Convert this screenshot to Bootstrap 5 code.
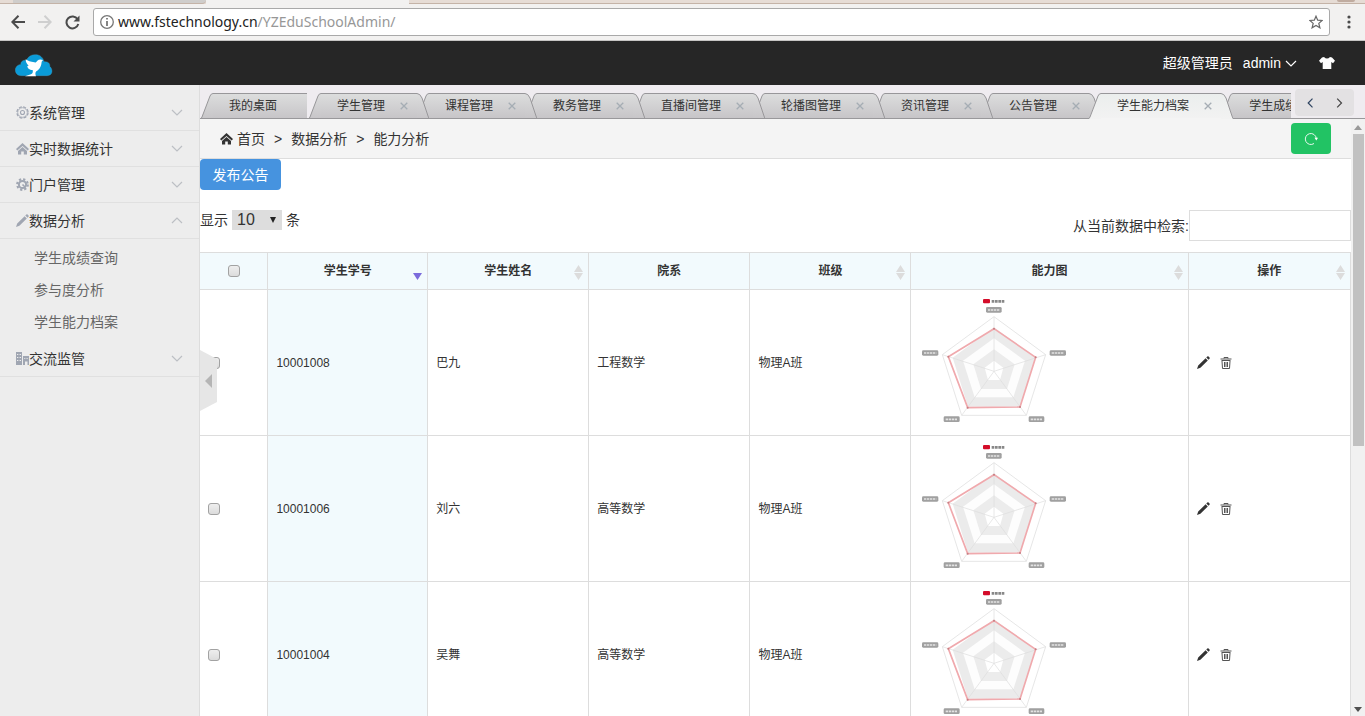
<!DOCTYPE html>
<html lang="zh-CN">
<head>
<meta charset="utf-8">
<meta name="viewport" content="width=device-width, initial-scale=1">
<title>能力分析</title>
<link href="https://cdn.jsdelivr.net/npm/bootstrap@5.3.0/dist/css/bootstrap.min.css" rel="stylesheet">
<style>
body{font-family:"Liberation Sans","Noto Sans CJK SC",sans-serif;font-size:14px;line-height:20px;color:#333;background:#fff}
svg{display:block;flex:none}
a{color:inherit;text-decoration:none}
button{color:inherit}
.plain-btn{border:0;background:none;padding:0}
.fit-h{min-height:0}
.fit-w{min-width:0}
/* browser chrome */
.chrome-strip{height:4px;background:#e6dcd5}
.chrome-strip span{border-bottom:1px solid #c4b3a7}
.strip-first{width:13px}
.strip-idle{width:193px;background:#cfcdcb;border-radius:0 0 4px 0}
.chrome-strip .strip-live{width:203px;background:#f2f1f0;border-color:#f2f1f0}
.strip-knob{width:18px;height:2px;margin-right:10px;background:#c0aca0;border-radius:0 0 3px 3px}
.toolbar{height:37px;gap:13px;background:#f2f1f0;border-bottom:1px solid #c6c5c4;padding:4px 12px 4px 11px}
.address{height:28px;border:1px solid #a9a9a9;border-radius:3px;background:#fff;margin-right:2px;padding:0 6px;font-family:"Noto Sans",sans-serif;color:#222}
.address .url-path{color:#979797}
/* application header */
.top-bar{height:44px;background:#262626;color:#fff;padding:0 30px 0 15px}
.user-btn{margin:0 22px 0 10px}
.side-menu{width:200px;background:#ededed;border-right:1px solid #ddd;padding-top:10px}
.menu-head{height:36px;width:100%;padding:0 16px;border-bottom:1px solid #e0e0e0}
.menu-head .ico{color:#a0a6b2}
.menu-head .chev{color:#bcbfc4}
.sub-menu{padding:3px 0 3px 34px;margin:0;list-style:none;line-height:32px;color:#666}
/* tabs: each one lies over the tab that follows it */
.tab-zone{height:34px;background:#efecf0;border-bottom:1px solid #99989b}
.tab-clip{overflow:hidden;height:34px;margin-bottom:-1px;padding:8px 0 0 1px}
.page-tab{height:26px;font-size:12px;margin-right:-12px;position:relative}
.page-tab:nth-child(2){z-index:9}.page-tab:nth-child(3){z-index:8}.page-tab:nth-child(4){z-index:7}
.page-tab:nth-child(5){z-index:6}.page-tab:nth-child(6){z-index:5}.page-tab:nth-child(7){z-index:4}
.page-tab:nth-child(8){z-index:3}.page-tab.current{z-index:10}
.page-tab .tab-mid{background:linear-gradient(#dcdddd,#c7c5c8);border-top:1px solid #98979a;border-bottom:1px solid #99989b;height:26px;padding:0 9px 0 16px;white-space:nowrap}
.page-tab.home{margin-right:2px;width:106px}
.page-tab .tab-x{color:#a5adb4;margin-left:15px}
.page-tab.current .tab-mid{background:linear-gradient(#ebeeed,#f2f2f2);border-bottom-color:#f4f4f4}
.tab-nav{height:27px;width:59px;margin:4px 11px 0 4px;background:#e3e1e3;border-radius:4px;padding:0 11px 0 12px}
/* content */
.crumbs{height:40px;background:#f4f4f4;border-bottom:1px solid #ddd;padding:0 20px}
.crumb-sep{margin:0 9px}
.refresh{width:40px;height:31px;background:#22c364;border-radius:4px}
.publish{width:81px;height:31px;border-radius:4px;background:#4693df;color:#fff}
.tools{margin:20px 0 11px}
.page-size{appearance:none;width:50px;height:20px;border:0;border-radius:0;margin:0 4px;padding:0 5px;line-height:20px;font-size:16px;color:#333;background:#ddd url("data:image/svg+xml,%3Csvg xmlns='http://www.w3.org/2000/svg' width='6' height='6'%3E%3Cpath d='M0 0h6L3 6z' fill='%23222'/%3E%3C/svg%3E") no-repeat right 6px center}
.search-box{width:162px;height:31px;border:1px solid #ddd}
.grid-table{table-layout:fixed;width:100%;font-size:12px;line-height:18px;border-collapse:collapse}
.grid-table th,.grid-table td{border:1px solid #ddd;border-left:0;padding:0 8px}
.grid-table th{height:37px;background:#f2fafd;text-align:center;position:relative}
.grid-table td{height:146px}
.grid-table td.sorted{background:#f2fafd}
.grid-table td.plot{padding:0}
.row-tools{gap:10px}
.sorter{position:absolute;right:5px;top:12px}
.c-check{width:5.9%}.c-id{width:13.9%}.c-std{width:14%}.c-plot{width:24.1%}
.tick{appearance:none;display:block;width:12px;height:12px;margin:0;border:1px solid #a2a2a2;border-radius:3px;background:linear-gradient(#eee,#dcdcdc)}
.grid-table th .tick{margin:0 auto}
.scroll-rail{width:14px;background:#f1f1f1}
.scroll-thumb{width:11px;height:53%;background:#c1c1c1}
.collapse-tab{position:absolute;left:200px;top:265px}
</style>
</head>
<body class="vh-100 overflow-hidden d-flex flex-column">
<svg width="0" height="0" class="position-absolute" aria-hidden="true">
  <defs>
    <linearGradient id="idle" x1="0" y1="0" x2="0" y2="1"><stop stop-color="#dcdddd"/><stop offset="1" stop-color="#c7c5c8"/></linearGradient>
    <linearGradient id="live" x1="0" y1="0" x2="0" y2="1"><stop stop-color="#ebeeed"/><stop offset="1" stop-color="#f2f2f2"/></linearGradient>
    <filter id="soft"><feGaussianBlur stdDeviation="1.6"/></filter>
  </defs>
  <symbol id="cap-l" viewBox="0 0 12 26"><path d="M0 26 9 3Q10 .5 12 .5V26z" fill="url(#idle)"/><path d="M0 25.500 1 24 9 3Q10 .5 12 .5M0 25.500H12" fill="none" stroke="#98979a"/></symbol>
  <symbol id="cap-r" viewBox="0 0 12 26"><path d="M12 26 5 5Q3 .5 0 .5V26z" fill="url(#idle)"/><path d="M12 25.500 11 23 5 5Q3 .5 0 .5M0 25.500H12" fill="none" stroke="#98979a"/></symbol>
  <symbol id="cap-l-on" viewBox="0 0 12 26"><path d="M0 26 9 3Q10 .5 12 .5V26z" fill="url(#live)"/><path d="M0 25.500 1 24 9 3Q10 .5 12 .5" fill="none" stroke="#98979a"/></symbol>
  <symbol id="cap-r-on" viewBox="0 0 12 26"><path d="M12 26 5 5Q3 .5 0 .5V26z" fill="url(#live)"/><path d="M12 25.500 11 23 5 5Q3 .5 0 .5" fill="none" stroke="#98979a"/></symbol>
  <symbol id="x" viewBox="0 0 8 8"><path d="M.7.700 7.300 7.300M7.300.7.700 7.300" stroke="currentColor" stroke-width="1.300"/></symbol>
  <symbol id="down" viewBox="0 0 12 7"><path d="M1 1l5 5 5-5" fill="none" stroke="currentColor" stroke-width="1.200"/></symbol>
  <symbol id="up" viewBox="0 0 12 7"><path d="M1 6l5-5 5 5" fill="none" stroke="currentColor" stroke-width="1.200"/></symbol>
  <symbol id="home" viewBox="0 0 13 12"><path d="M6.500 0 13 6 11.700 7.600 6.500 3 1.300 7.600 0 6z"/><path d="M6.500 3.900 11 7.900V11.500H7.800V8.500H5.200V11.500H2V7.900z"/></symbol>
  <symbol id="pencil" viewBox="0 0 13 13"><path d="M0 13 1.200 9.600 8.600 2.200 10.800 4.400 3.400 11.800zM9.300 1.500 10.300.5Q11-.1 11.600.500L12.500 1.400Q13.100 2 12.500 2.700L11.500 3.700z"/></symbol>
  <symbol id="bin" viewBox="0 0 12 12"><path d="M4 1.500V.5H8V1.500M.5 2H11.500M1.500 3.500H10.500M2 4 2.500 11.500H9.500L10 4M4.500 5V10M6 5V10M7.500 5V10" fill="none" stroke="#555"/></symbol>
  <symbol id="radar" viewBox="6 15 480 435">
    <g filter="url(#soft)" stroke-linejoin="round">
      <path d="M255 95 410 209 352 391H158L100 209z" fill="#fff" stroke="#e6e6e6" stroke-width="3"/>
      <path d="M255 127 379 218 333 365H177L131 218z" fill="#ebebeb"/>
      <path d="M255 160 348 227 313 337H197L162 227z" fill="#fdfdfd"/>
      <path d="M255 193 317 238 294 312H216L193 238z" fill="#ececec"/>
      <path d="M255 227 283 248 273 285H237L227 248z" fill="#fff"/>
      <path d="M255 95V259M410 209 255 259M352 391 255 259M158 391 255 259M100 209 255 259" fill="none" stroke="#dcdcdc" stroke-width="2"/>
      <path d="M255 131 380 217 333 366 176 368 118 215z" fill="none" stroke="#f0a9ad" stroke-width="5"/>
      <g fill="#c77f84"><circle cx="255" cy="131" r="3"/><circle cx="380" cy="217" r="3"/><circle cx="333" cy="366" r="3"/><circle cx="176" cy="368" r="3"/><circle cx="118" cy="215" r="3"/></g>
      <rect x="222" y="42" width="21" height="13" rx="3" fill="#d40c2b"/>
      <path d="M248 49H287" stroke="#888" stroke-width="8" stroke-dasharray="8 2"/>
      <g fill="#a0a0a0"><rect x="231" y="66" width="47" height="17" rx="4"/><rect x="39" y="196" width="49" height="16" rx="4"/><rect x="422" y="196" width="49" height="16" rx="4"/><rect x="104" y="394" width="48" height="17" rx="4"/><rect x="359" y="394" width="47" height="17" rx="4"/></g>
      <path d="M237 75H272M45 204H82M428 204H465M110 403H146M365 403H400" stroke="#e2e2e2" stroke-width="5" stroke-dasharray="7 2"/>
    </g>
  </symbol>
  <symbol id="sort" viewBox="0 0 9 15"><path d="M4.500 0 9 7H0zM0 8H9L4.500 15z" fill="#dcdcdc"/></symbol>
</svg>

<div class="chrome-strip d-flex flex-shrink-0">
  <span class="strip-first"></span><span class="strip-idle"></span><span class="strip-live"></span><span class="flex-grow-1 d-flex justify-content-end"><i class="strip-knob"></i></span>
</div>
<div class="toolbar d-flex align-items-center flex-shrink-0">
  <button class="plain-btn" aria-label="后退"><svg width="14" height="14" viewBox="0 0 14 14" fill="none" stroke="#4b4b4b" stroke-width="2"><path d="M14 7H1.500M7.500.8 1.300 7 7.500 13.200"/></svg></button>
  <button class="plain-btn" aria-label="前进"><svg width="14" height="14" viewBox="0 0 14 14" fill="none" stroke="#cfcfcf" stroke-width="2"><path d="M0 7H12.500M6.500.8 12.700 7 6.500 13.200"/></svg></button>
  <button class="plain-btn" aria-label="刷新"><svg width="15" height="15" viewBox="0 0 15 15"><path d="M12.600 4.200A6 6 0 1 0 13.300 9" fill="none" stroke="#4b4b4b" stroke-width="2"/><path d="M14.500.5V6.500H8.500z" fill="#4b4b4b"/></svg></button>
  <div class="address d-flex align-items-center flex-grow-1">
    <svg width="14" height="14" viewBox="0 0 14 14"><circle cx="7" cy="7" r="6.300" fill="none" stroke="#777" stroke-width="1.300"/><path d="M7 3V4.600M7 6V11" stroke="#666" stroke-width="1.600"/></svg>
    <span class="flex-grow-1 ms-1">www.fstechnology.cn<span class="url-path">/YZEduSchoolAdmin/</span></span>
    <svg width="14" height="14" viewBox="0 0 14 14"><path d="M7 1.200 8.700 5.200 13.200 5.500 9.800 8.400 10.900 12.800 7 10.400 3.100 12.800 4.200 8.400.8 5.500 5.300 5.200z" fill="none" stroke="#666" stroke-width="1.200"/></svg>
  </div>
  <button class="plain-btn" aria-label="菜单"><svg width="8" height="14" viewBox="0 0 8 14" fill="#4b4b4b"><circle cx="4" cy="2" r="1.600"/><circle cx="4" cy="7" r="1.600"/><circle cx="4" cy="12" r="1.600"/></svg></button>
</div>

<header class="top-bar d-flex align-items-center flex-shrink-0">
  <a href="#" aria-label="首页" class="me-auto mt-1"><svg width="38" height="23" viewBox="45 158 114 69">
    <path d="M64 223C52 223 46 215 46 206C46 197 54 189 62 190C62 180 70 175 79 177C85 165 94 160 106 160C120 160 129 168 132 181C144 180 151 187 149 195C160 205 158 223 141 223z" fill="#0a9bd8" stroke="#4aa9d0" stroke-width="1"/>
    <path d="M77 174C83 179 92 181 103 183C107 184 109 182 112 178C116 174 122 173 129 176L125 181C124 194 120 203 109 210C105 213 106 220 108 225H75L93 219C99 216 99 211 98 206C88 206 82 200 82 194L86 193C80 188 77 182 77 174z" fill="#fff"/></svg></a>
  <span>超级管理员</span>
  <button class="plain-btn user-btn d-flex align-items-center gap-1"><span>admin</span><svg width="12" height="7"><use href="#down"/></svg></button>
  <button class="plain-btn" aria-label="换肤"><svg width="16" height="12" viewBox="0 0 16 12"><path d="M5 0Q8 3 11 0L13 .6 16 3.800 14 6.300 12.300 5V12H3.700V5L2 6.300 0 3.800 3 .6z" fill="#fff"/></svg></button>
</header>

<div class="d-flex flex-grow-1 position-relative fit-h">
  <nav class="side-menu flex-shrink-0" aria-label="主菜单">
    <button class="plain-btn menu-head d-flex align-items-center"><svg class="ico" width="13" height="13" viewBox="0 0 13 13" fill="none" stroke="currentColor"><circle cx="6.500" cy="6.500" r="5.600" stroke-dasharray="3 1.400" stroke-width="1.200"/><circle cx="6.500" cy="6.500" r="4.800" stroke-width=".8"/><circle cx="6.500" cy="6.500" r="2" stroke-width="1.100"/></svg><span class="me-auto">系统管理</span><svg class="chev" width="12" height="7"><use href="#down"/></svg></button>
    <button class="plain-btn menu-head d-flex align-items-center"><svg class="ico" width="13" height="12" fill="currentColor"><use href="#home"/></svg><span class="me-auto">实时数据统计</span><svg class="chev" width="12" height="7"><use href="#down"/></svg></button>
    <button class="plain-btn menu-head d-flex align-items-center"><svg class="ico" width="13" height="13" viewBox="0 0 13 13" fill="none" stroke="currentColor"><circle cx="6.500" cy="6.500" r="5.300" stroke-width="2.200" stroke-dasharray="2.200 1.960"/><circle cx="6.500" cy="6.500" r="3.600" stroke-width="2"/><path d="M6.500 6.500 9 9" stroke-width="1.600"/></svg><span class="me-auto">门户管理</span><svg class="chev" width="12" height="7"><use href="#down"/></svg></button>
    <button class="plain-btn menu-head d-flex align-items-center"><svg class="ico" width="13" height="13" fill="currentColor"><use href="#pencil"/></svg><span class="me-auto">数据分析</span><svg class="chev" width="12" height="7"><use href="#up"/></svg></button>
    <ul class="sub-menu"><li><a href="#">学生成绩查询</a></li><li><a href="#">参与度分析</a></li><li><a href="#">学生能力档案</a></li></ul>
    <button class="plain-btn menu-head d-flex align-items-center"><svg class="ico" width="13" height="13" viewBox="0 0 13 13" fill="currentColor" fill-rule="evenodd"><path d="M0 0H6V13H0zM1 2V3H2.300V2zM3.600 2V3H5V2zM1 5V6H2.300V5zM3.600 5V6H5V5zM1 8V9H2.300V8zM3.600 8V9H5V8zM7 4H13V13H11.500V9.500H9V13H7zM8.300 6V7H9.300V6zM10.600 6V7H11.600V6z"/></svg><span class="me-auto">交流监管</span><svg class="chev" width="12" height="7"><use href="#down"/></svg></button>
  </nav>
  <button class="plain-btn collapse-tab" aria-label="收起菜单"><svg width="17" height="61" viewBox="0 0 17 61"><path d="M0 0 17 9V52L0 61z" fill="#e6e6e6"/><path d="M12 24V38L5 31z" fill="#b5b5b5"/></svg></button>

  <main class="flex-grow-1 d-flex flex-column fit-w">
    <div class="tab-zone d-flex flex-shrink-0">
      <div class="tab-clip d-flex flex-grow-1 fit-w">
        <div class="page-tab home d-flex flex-shrink-0"><svg width="12" height="26"><use href="#cap-l"/></svg><div class="tab-mid d-flex align-items-center flex-grow-1"><button class="plain-btn">我的桌面</button></div></div>
        <div class="page-tab d-flex flex-shrink-0"><svg width="12" height="26"><use href="#cap-l"/></svg><div class="tab-mid d-flex align-items-center"><button class="plain-btn">学生管理</button><button class="plain-btn tab-x" aria-label="关闭"><svg width="8" height="8"><use href="#x"/></svg></button></div><svg width="12" height="26"><use href="#cap-r"/></svg></div>
        <div class="page-tab d-flex flex-shrink-0"><svg width="12" height="26"><use href="#cap-l"/></svg><div class="tab-mid d-flex align-items-center"><button class="plain-btn">课程管理</button><button class="plain-btn tab-x" aria-label="关闭"><svg width="8" height="8"><use href="#x"/></svg></button></div><svg width="12" height="26"><use href="#cap-r"/></svg></div>
        <div class="page-tab d-flex flex-shrink-0"><svg width="12" height="26"><use href="#cap-l"/></svg><div class="tab-mid d-flex align-items-center"><button class="plain-btn">教务管理</button><button class="plain-btn tab-x" aria-label="关闭"><svg width="8" height="8"><use href="#x"/></svg></button></div><svg width="12" height="26"><use href="#cap-r"/></svg></div>
        <div class="page-tab d-flex flex-shrink-0"><svg width="12" height="26"><use href="#cap-l"/></svg><div class="tab-mid d-flex align-items-center"><button class="plain-btn">直播间管理</button><button class="plain-btn tab-x" aria-label="关闭"><svg width="8" height="8"><use href="#x"/></svg></button></div><svg width="12" height="26"><use href="#cap-r"/></svg></div>
        <div class="page-tab d-flex flex-shrink-0"><svg width="12" height="26"><use href="#cap-l"/></svg><div class="tab-mid d-flex align-items-center"><button class="plain-btn">轮播图管理</button><button class="plain-btn tab-x" aria-label="关闭"><svg width="8" height="8"><use href="#x"/></svg></button></div><svg width="12" height="26"><use href="#cap-r"/></svg></div>
        <div class="page-tab d-flex flex-shrink-0"><svg width="12" height="26"><use href="#cap-l"/></svg><div class="tab-mid d-flex align-items-center"><button class="plain-btn">资讯管理</button><button class="plain-btn tab-x" aria-label="关闭"><svg width="8" height="8"><use href="#x"/></svg></button></div><svg width="12" height="26"><use href="#cap-r"/></svg></div>
        <div class="page-tab d-flex flex-shrink-0"><svg width="12" height="26"><use href="#cap-l"/></svg><div class="tab-mid d-flex align-items-center"><button class="plain-btn">公告管理</button><button class="plain-btn tab-x" aria-label="关闭"><svg width="8" height="8"><use href="#x"/></svg></button></div><svg width="12" height="26"><use href="#cap-r"/></svg></div>
        <div class="page-tab current d-flex flex-shrink-0"><svg width="12" height="26"><use href="#cap-l-on"/></svg><div class="tab-mid d-flex align-items-center"><button class="plain-btn">学生能力档案</button><button class="plain-btn tab-x" aria-label="关闭"><svg width="8" height="8"><use href="#x"/></svg></button></div><svg width="12" height="26"><use href="#cap-r-on"/></svg></div>
        <div class="page-tab d-flex flex-shrink-0"><svg width="12" height="26"><use href="#cap-l"/></svg><div class="tab-mid d-flex align-items-center"><button class="plain-btn">学生成绩</button></div></div>
      </div>
      <div class="tab-nav d-flex align-items-center justify-content-between flex-shrink-0">
        <button class="plain-btn" aria-label="向左"><svg width="7" height="10" viewBox="0 0 7 10" fill="none" stroke="#2e4360" stroke-width="1.200"><path d="M5.500.7 1.200 5 5.500 9.300"/></svg></button>
        <button class="plain-btn" aria-label="向右"><svg width="7" height="10" viewBox="0 0 7 10" fill="none" stroke="#444" stroke-width="1.200"><path d="M1.200.7 5.500 5 1.200 9.300"/></svg></button>
      </div>
    </div>

    <div class="d-flex flex-grow-1 fit-h">
      <div class="flex-grow-1 overflow-hidden">
        <div class="crumbs d-flex align-items-center">
          <svg width="13" height="12" fill="#333"><use href="#home"/></svg>
          <nav class="me-auto ms-1" aria-label="位置"><a href="#">首页</a><span class="crumb-sep">&gt;</span><a href="#">数据分析</a><span class="crumb-sep">&gt;</span><span>能力分析</span></nav>
          <button class="plain-btn refresh d-flex align-items-center justify-content-center" aria-label="刷新页面"><svg width="14" height="14" viewBox="0 0 14 14"><path d="M10 11.500A5.500 5.500 0 1 1 12.300 6.500" fill="none" stroke="#e6f8ed"/><path d="M10.500 5.800H14L12.300 8.500z" fill="#fff"/></svg></button>
        </div>
        <button class="plain-btn publish d-block">发布公告</button>
        <div class="tools d-flex justify-content-between">
          <div class="d-flex align-items-center align-self-start"><label for="size">显示</label><select id="size" class="page-size"><option>10</option></select><label for="size">条</label></div>
          <div class="d-flex align-items-center"><label for="find">从当前数据中检索:</label><input id="find" class="search-box" type="text"></div>
        </div>
        <table class="grid-table">
          <colgroup><col class="c-check"><col class="c-id"><col class="c-std"><col class="c-std"><col class="c-std"><col class="c-plot"><col></colgroup>
          <thead><tr>
            <th><input class="tick" type="checkbox" aria-label="全选"></th>
            <th>学生学号<svg class="sorter" width="9" height="15" viewBox="0 0 9 15"><path d="M0 8H9L4.500 15z" fill="#7b6bdc"/></svg></th>
            <th>学生姓名<svg class="sorter" width="9" height="15"><use href="#sort"/></svg></th>
            <th>院系</th>
            <th>班级<svg class="sorter" width="9" height="15"><use href="#sort"/></svg></th>
            <th>能力图<svg class="sorter" width="9" height="15"><use href="#sort"/></svg></th>
            <th>操作<svg class="sorter" width="9" height="15"><use href="#sort"/></svg></th>
          </tr></thead>
          <tbody>
            <tr><td><input class="tick" type="checkbox" aria-label="选择 巴九"></td><td class="sorted">10001008</td><td>巴九</td><td>工程数学</td><td>物理A班</td><td class="plot"><svg width="160" height="145"><use href="#radar"/></svg></td><td><div class="row-tools d-flex align-items-center"><a href="#" aria-label="编辑"><svg width="13" height="13" fill="#333"><use href="#pencil"/></svg></a><a href="#" aria-label="删除"><svg width="12" height="12"><use href="#bin"/></svg></a></div></td></tr>
            <tr><td><input class="tick" type="checkbox" aria-label="选择 刘六"></td><td class="sorted">10001006</td><td>刘六</td><td>高等数学</td><td>物理A班</td><td class="plot"><svg width="160" height="145"><use href="#radar"/></svg></td><td><div class="row-tools d-flex align-items-center"><a href="#" aria-label="编辑"><svg width="13" height="13" fill="#333"><use href="#pencil"/></svg></a><a href="#" aria-label="删除"><svg width="12" height="12"><use href="#bin"/></svg></a></div></td></tr>
            <tr><td><input class="tick" type="checkbox" aria-label="选择 吴舞"></td><td class="sorted">10001004</td><td>吴舞</td><td>高等数学</td><td>物理A班</td><td class="plot"><svg width="160" height="145"><use href="#radar"/></svg></td><td><div class="row-tools d-flex align-items-center"><a href="#" aria-label="编辑"><svg width="13" height="13" fill="#333"><use href="#pencil"/></svg></a><a href="#" aria-label="删除"><svg width="12" height="12"><use href="#bin"/></svg></a></div></td></tr>
          </tbody>
        </table>
      </div>
      <div class="scroll-rail d-flex flex-column align-items-center flex-shrink-0 py-1" aria-hidden="true">
        <svg class="mb-1" width="8" height="7" viewBox="0 0 8 7"><path d="M4 2 8 7H0z" fill="#999"/></svg>
        <div class="scroll-thumb"></div>
        <svg class="mt-auto" width="8" height="5" viewBox="0 0 8 5"><path d="M0 0H8L4 5z" fill="#505050"/></svg>
      </div>
    </div>
  </main>
</div>
<script src="https://cdn.jsdelivr.net/npm/bootstrap@5.3.0/dist/js/bootstrap.bundle.min.js"></script>
</body>
</html>
